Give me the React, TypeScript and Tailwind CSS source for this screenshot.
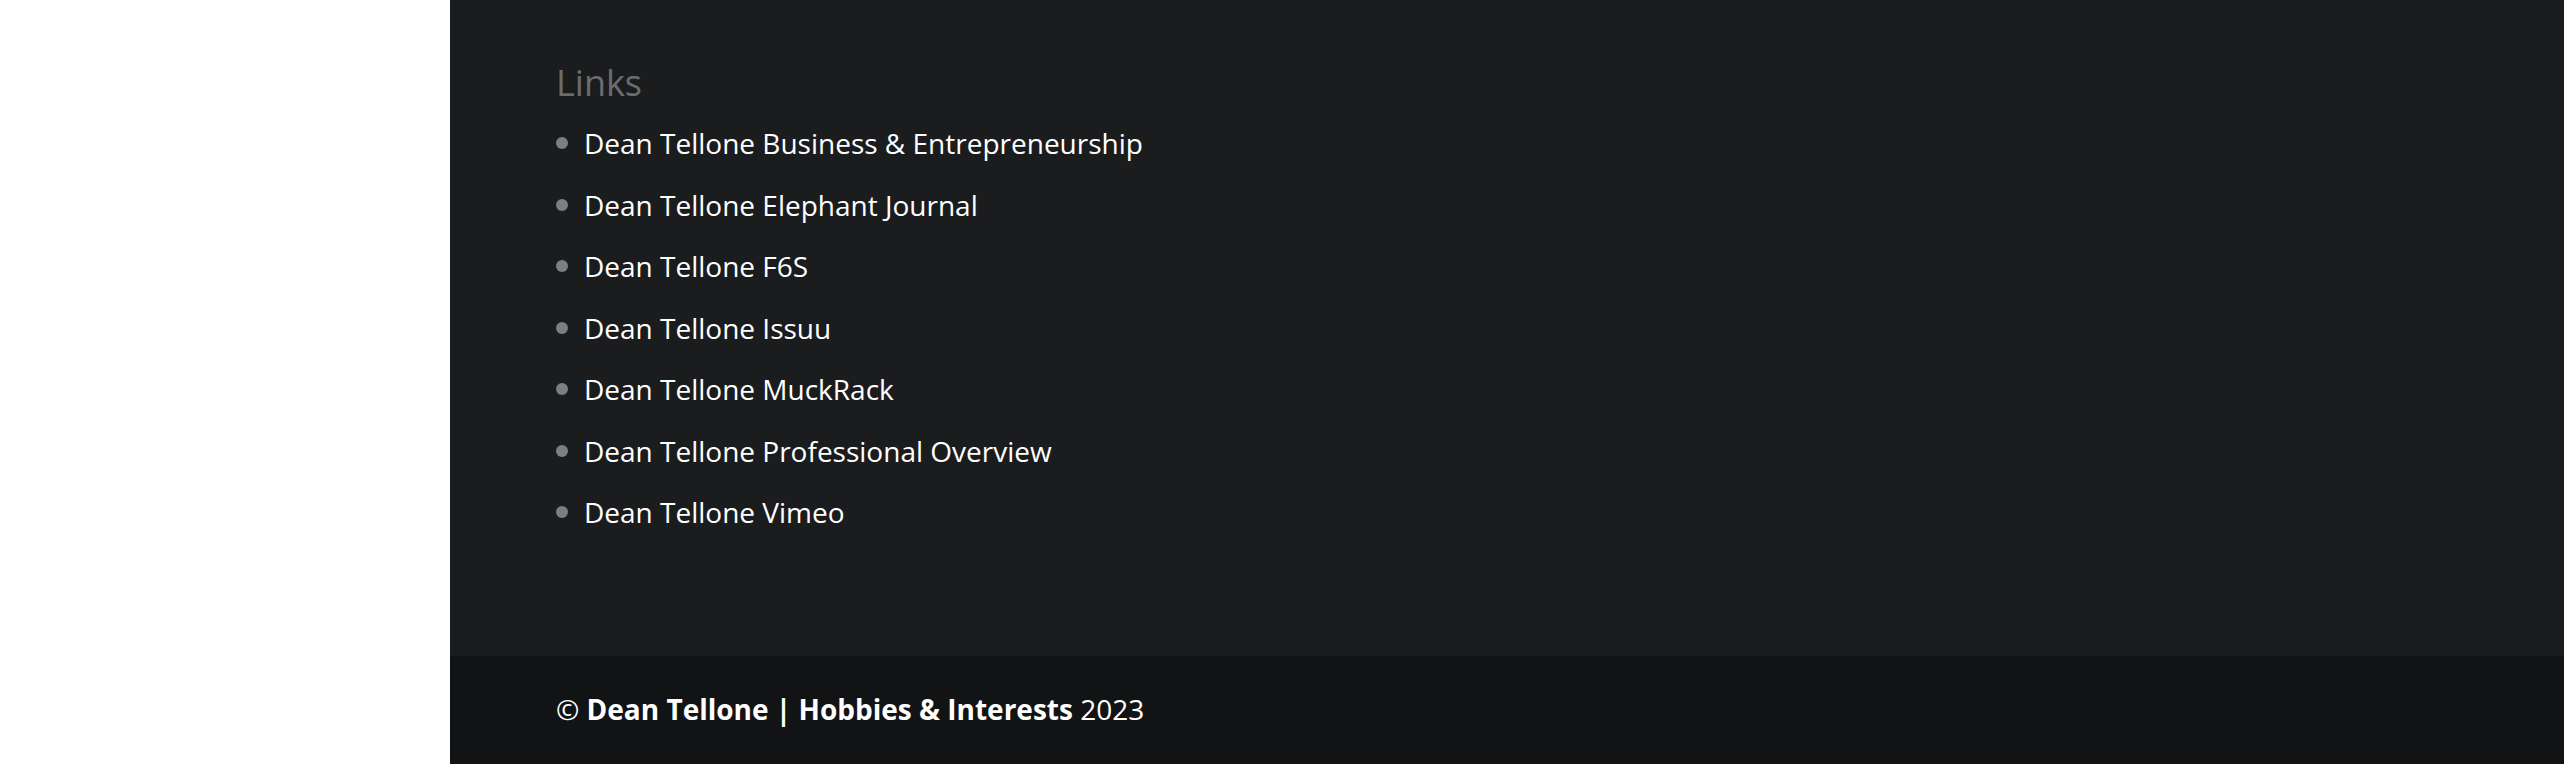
import React from "react";

const links = [
  "Dean Tellone Business & Entrepreneurship",
  "Dean Tellone Elephant Journal",
  "Dean Tellone F6S",
  "Dean Tellone Issuu",
  "Dean Tellone MuckRack",
  "Dean Tellone Professional Overview",
  "Dean Tellone Vimeo",
];

export default function App() {
  return (
    <div
      className="flex h-[764px] w-full overflow-hidden bg-white"
      style={{ fontFamily: '"Open Sans", "Liberation Sans", sans-serif' }}
    >
      <div className="w-[450px] shrink-0 bg-white" />
      <footer className="flex flex-1 flex-col">
        <div className="h-[656px] bg-[#1b1c1e] pl-[106px] pt-[61px]">
          <h4 className="text-[36px] leading-[44px] font-normal text-[#6b6c6e]">Links</h4>
          <ul className="mt-[7.5px]">
            {links.map((l) => (
              <li key={l} className="flex h-[61.5px] items-center">
                <span className="h-[12px] w-[12px] shrink-0 rounded-full bg-[#7d7e80]" />
                <a className="ml-[16px] text-[28px] leading-[38px] text-white" href="#">
                  {l}
                </a>
              </li>
            ))}
          </ul>
        </div>
        <div className="flex-1 bg-[#121315] pl-[106px] pt-[34px]">
          <p className="text-[28px] leading-[38px] text-white">
            © <b className="font-bold">Dean Tellone | Hobbies &amp; Interests</b> 2023
          </p>
        </div>
      </footer>
    </div>
  );
}
